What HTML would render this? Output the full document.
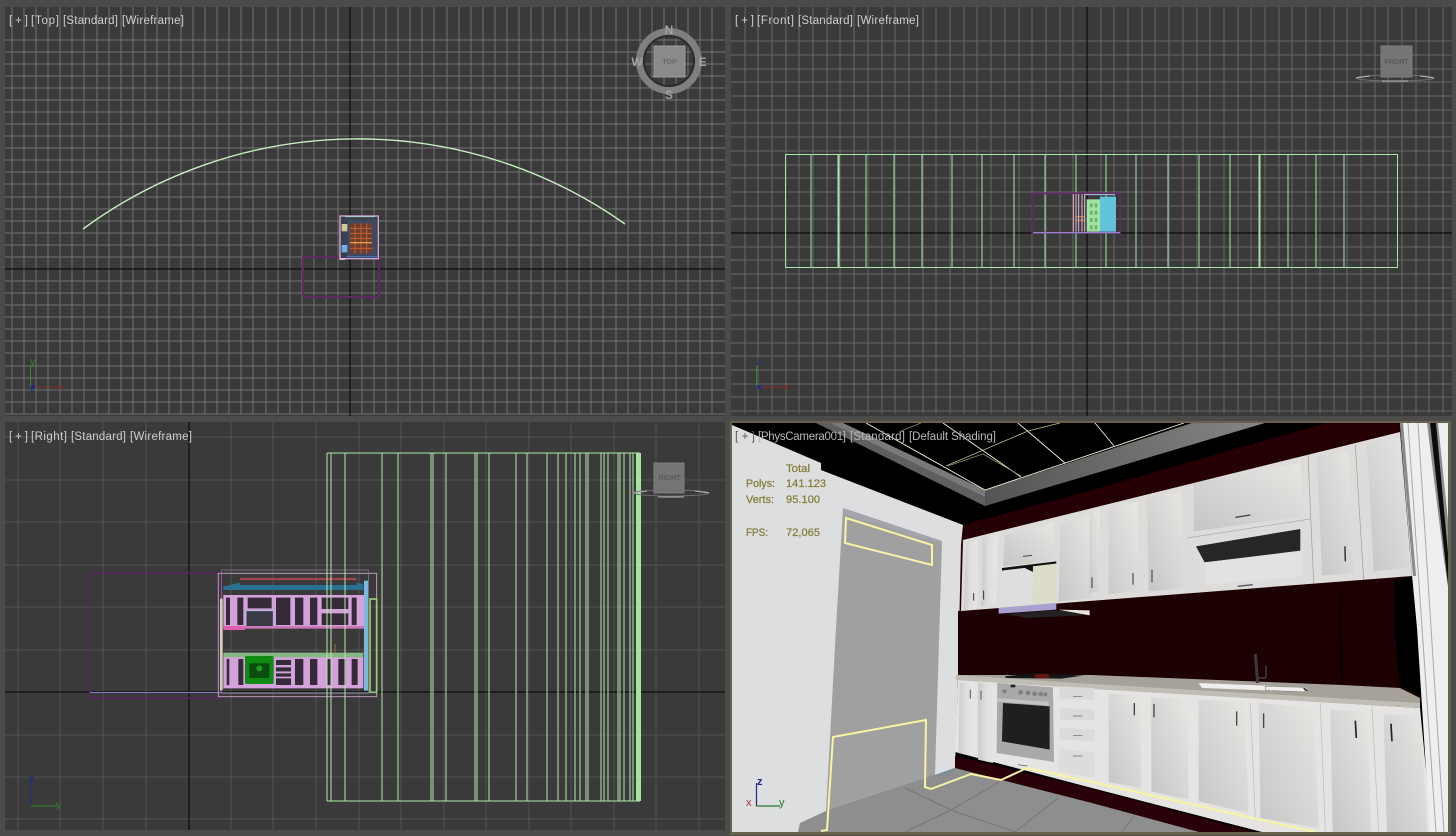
<!DOCTYPE html>
<html><head><meta charset="utf-8"><title>Viewports</title>
<style>
html,body{margin:0;padding:0;background:#4b4b4b;width:1456px;height:836px;overflow:hidden}
svg{display:block;position:absolute;left:0;top:0}
text{font-family:"Liberation Sans",sans-serif}
.l{font-size:11.5px;fill:#cfcfcf}
.p{font-size:11.5px;fill:#b8b8b8}
.s{font-size:11px;fill:#857d34;stroke:#857d34;stroke-width:.25px}
.g{shape-rendering:crispEdges;fill:none}
</style></head><body>
<svg width="1456" height="836" viewBox="0 0 1456 836" xmlns="http://www.w3.org/2000/svg">
<defs>
<clipPath id="c4"><rect x="732" y="423" width="716" height="409"/></clipPath>
<clipPath id="c3"><rect x="5" y="422" width="720" height="408"/></clipPath>
<linearGradient id="d1" x1="1" y1="0" x2="0" y2="1"><stop offset="0" stop-color="#e6e6e3"/><stop offset="1" stop-color="#c6c6c6"/></linearGradient>
<linearGradient id="d2" x1="1" y1="0" x2="0" y2="1"><stop offset="0" stop-color="#e8e7e4"/><stop offset="1" stop-color="#cacaca"/></linearGradient>
<linearGradient id="d3" x1="0" y1="0" x2="1" y2="0"><stop offset="0" stop-color="#cbcbcb"/><stop offset=".5" stop-color="#e0e0e0"/><stop offset="1" stop-color="#e6e6e6"/></linearGradient>
<linearGradient id="co" gradientUnits="userSpaceOnUse" x1="985" y1="500" x2="1265" y2="423"><stop offset="0" stop-color="#545454"/><stop offset="1" stop-color="#858585"/></linearGradient>
</defs>

<!-- viewport backgrounds -->
<rect x="5" y="7" width="720" height="409" fill="#3a3a3a"/>
<rect x="731" y="7" width="721" height="409" fill="#3a3a3a"/>
<rect x="5" y="422" width="720" height="408" fill="#3a3a3a"/>

<!-- top grid -->
<path class="g" stroke="#727272" d="M12 7V414M24 7V414M36 7V414M48 7V414M60 7V414M72 7V414M84 7V414M97 7V414M109 7V414M121 7V414M133 7V414M145 7V414M157 7V414M169 7V414M181 7V414M193 7V414M205 7V414M217 7V414M229 7V414M241 7V414M253 7V414M266 7V414M278 7V414M290 7V414M302 7V414M314 7V414M326 7V414M338 7V414M362 7V414M374 7V414M386 7V414M398 7V414M410 7V414M422 7V414M434 7V414M447 7V414M459 7V414M471 7V414M483 7V414M495 7V414M507 7V414M519 7V414M531 7V414M543 7V414M555 7V414M567 7V414M579 7V414M591 7V414M603 7V414M616 7V414M628 7V414M640 7V414M652 7V414M664 7V414M676 7V414M688 7V414M700 7V414M712 7V414M5 40H725M5 52H725M5 64H725M5 76H725M5 88H725M5 100H725M5 112H725M5 124H725M5 136H725M5 148H725M5 160H725M5 172H725M5 184H725M5 197H725M5 209H725M5 221H725M5 233H725M5 245H725M5 257H725M5 281H725M5 293H725M5 305H725M5 317H725M5 329H725M5 341H725M5 353H725M5 366H725M5 378H725M5 390H725M5 402H725M5 414H725"/>
<path class="g" stroke="#000" d="M350 7V416M5 269H725"/>

<!-- front grid -->
<path class="g" stroke="#686868" d="M745 7V414M758 7V414M772 7V414M786 7V414M799 7V414M813 7V414M827 7V414M840 7V414M854 7V414M868 7V414M882 7V414M895 7V414M909 7V414M923 7V414M936 7V414M950 7V414M964 7V414M977 7V414M991 7V414M1005 7V414M1019 7V414M1032 7V414M1046 7V414M1060 7V414M1073 7V414M1101 7V414M1114 7V414M1128 7V414M1142 7V414M1155 7V414M1169 7V414M1183 7V414M1197 7V414M1210 7V414M1224 7V414M1238 7V414M1251 7V414M1265 7V414M1279 7V414M1292 7V414M1306 7V414M1320 7V414M1334 7V414M1347 7V414M1361 7V414M1375 7V414M1388 7V414M1402 7V414M1416 7V414M1429 7V414M1443 7V414M731 41H1452M731 55H1452M731 69H1452M731 82H1452M731 96H1452M731 110H1452M731 123H1452M731 137H1452M731 151H1452M731 165H1452M731 178H1452M731 192H1452M731 206H1452M731 219H1452M731 247H1452M731 260H1452M731 274H1452M731 288H1452M731 301H1452M731 315H1452M731 329H1452M731 343H1452M731 356H1452M731 370H1452M731 384H1452M731 397H1452M731 411H1452"/>
<path class="g" stroke="#000" d="M1087 7V416M731 233H1452"/>

<!-- right grid -->
<path class="g" stroke="#535353" d="M18 422V830M60 422V830M103 422V830M146 422V830M231 422V830M273 422V830M316 422V830M359 422V830M401 422V830M444 422V830M486 422V830M529 422V830M571 422V830M614 422V830M656 422V830M699 422V830M5 437H725M5 480H725M5 522H725M5 565H725M5 607H725M5 650H725M5 735H725M5 777H725M5 819H725"/>
<path class="g" stroke="#000" d="M189 422V830M5 692H725"/>

<!-- TOP wires -->
<path d="M83 229A463 463 0 0 1 625 224" fill="none" stroke="#c6efbf" stroke-width="1.4"/>
<rect x="303" y="257" width="76" height="40" fill="none" stroke="#5f2a62" stroke-width="2"/>
<g transform="translate(290 200) scale(.3333)">
<rect x="150" y="48" width="115" height="128" fill="#38404e" stroke="#d8a8d8" stroke-width="4"/>
<rect x="172" y="60" width="88" height="110" fill="#3f4a60"/>
<rect x="180" y="70" width="66" height="90" fill="#6c3e30"/>
<path d="M180 85H246M180 100H246M180 115H246M180 145H246M195 70V160M213 70V160M230 70V160" stroke="#c8622c" stroke-width="3" fill="none"/>
<path d="M180 128H246" stroke="#e8a040" stroke-width="4"/>
<rect x="155" y="72" width="17" height="22" fill="#cfc79a"/>
<rect x="155" y="135" width="17" height="22" fill="#70b0e8"/>
<path d="M165 50H255" stroke="#a8d0c8" stroke-width="3"/>
<path d="M170 170H262" stroke="#4a7ac0" stroke-width="3"/>
<path d="M150 165V178H165" stroke="#f0c0f0" stroke-width="3" fill="none"/>
</g>

<!-- FRONT wires -->
<g fill="none" stroke="#a8e4a8" stroke-width="1">
<rect x="785.500" y="154.500" width="612" height="113"/>
<path class="g" d="M811 154V267M866 154V267M894 154V267M922 154V267M952 154V267M982 154V267M1014 154V267M1045 154V267M1076 154V267M1106 154V267M1136 154V267M1168 154V267M1199 154V267M1230 154V267M1288 154V267M1316 154V267M1344 154V267"/>
<path d="M838.500 154V267M1259.500 154V267" stroke-width="2"/>
</g>
<g transform="translate(1020 180) scale(.3333)">
<rect x="38" y="40" width="262" height="118" fill="none" stroke="#5f2a62" stroke-width="6"/>
<rect x="240" y="50" width="48" height="105" fill="#62c4dc"/>
<rect x="200" y="58" width="40" height="97" fill="#a4e2a4"/>
<path d="M210 70h8v12h-8zM224 70h8v12h-8zM210 92h8v12h-8zM224 92h8v12h-8zM210 114h8v12h-8zM224 114h8v12h-8zM210 136h8v12h-8zM224 136h8v12h-8z" fill="#6bb56b"/>
<path d="M160 42V155M168 42V155M176 42V155M186 42V155M194 42V155" stroke="#e8b8d8" stroke-width="3" fill="none"/>
<path d="M165 110H195M168 122H195" stroke="#d09060" stroke-width="3"/>
<path d="M195 44H285" stroke="#a0d0e8" stroke-width="3"/>
<path d="M40 158H300" stroke="#9a80d0" stroke-width="4"/>
</g>

<!-- RIGHT wires -->
<g clip-path="url(#c3)">
<rect x="90" y="573" width="130" height="125" fill="none" stroke="#5a2560" stroke-width="1.500"/>
<path d="M90 692.500H222" stroke="#7c80c4" stroke-width="1"/>
<g transform="translate(210 560) scale(.3333)">
<rect x="25" y="40" width="475" height="370" fill="none" stroke="#b89ab8" stroke-width="3"/>
<rect x="35" y="30" width="440" height="370" fill="none" stroke="#a07aa0" stroke-width="2"/>
<path d="M90 57L440 57" stroke="#a04450" stroke-width="7"/>
<path d="M40 80L90 68V75H440V68L460 72V90H40Z" fill="#2a7090"/>
<rect x="40" y="105" width="425" height="100" fill="#d4a2da"/>
<path d="M48 113h12v82h-12zM82 113h18v82h-18zM113 113h72v32h-72zM198 113h43v82h-43zM255 113h25v82h-25zM300 113h22v82h-22zM335 113h80v34h-80zM335 160h80v35h-80zM425 113h15v82h-15z" fill="#352a38"/>
<rect x="108" y="152" width="82" height="50" fill="#3a3a44" stroke="#a8b8e0" stroke-width="3"/>
<rect x="40" y="198" width="65" height="12" fill="#e060b0"/>
<rect x="105" y="198" width="360" height="8" fill="#c87ab8"/>
<rect x="40" y="290" width="420" height="95" fill="#d4a2da"/>
<path d="M50 297h8v78h-8zM85 297h15v78h-15zM255 297h25v78h-25zM300 297h22v78h-22zM352 297h12v78h-12zM385 297h22v78h-22zM425 297h18v78h-18zM198 300h45v15h-45zM198 322h45v12h-45zM198 340h45v10h-45zM198 355h45v20h-45z" fill="#352a38"/>
<rect x="40" y="278" width="420" height="14" fill="#86b884"/>
<rect x="105" y="288" width="86" height="84" rx="5" fill="#0f8a12"/>
<rect x="118" y="310" width="60" height="44" fill="#0b4d10"/>
<circle cx="148" cy="325" r="9" fill="#209a24"/>
<rect x="462" y="62" width="12" height="330" fill="#7ab8e2"/>
<rect x="480" y="117" width="20" height="280" fill="none" stroke="#96d070" stroke-width="5"/>
<rect x="30" y="116" width="8" height="275" fill="#d2d2b4"/>
<path d="M375 252V280" stroke="#a06a40" stroke-width="3"/>
<path d="M25 398H500" stroke="#88a0b0" stroke-width="2"/>
</g>
<path class="g" stroke="#b0eaac" d="M327 453V801M331 453V801M345 453V801M382 453V801M398 453V801M431 453V801M433 453V801M446 453V801M475 453V801M477 453V801M489 453V801M516 453V801M527 453V801M547 453V801M558 453V801M566 453V801M575 453V801M580 453V801M586 453V801M588 453V801M601 453V801M604 453V801M608 453V801M618 453V801M620 453V801M624 453V801M630 453V801M633 453V801M327 453H640M327 801H640"/>
<rect x="636" y="453" width="5" height="348" fill="#a4e4a0"/>
</g>

<!-- gizmos -->
<circle cx="669" cy="61" r="29.500" fill="none" stroke="#7f7f7f" stroke-width="7"/>
<circle cx="669" cy="61" r="25" fill="none" stroke="#2c2c2c" stroke-width="2"/>
<rect x="654" y="46" width="31" height="31" fill="#8a8a8a" stroke="#9c9c9c"/>
<text x="669.500" y="64" text-anchor="middle" font-size="7" font-weight="bold" fill="#6b6b6b">TOP</text>
<g font-size="12" font-weight="bold" fill="#a2a2a2" text-anchor="middle">
<text x="669" y="34">N</text><text x="637" y="66">W</text><text x="702.500" y="66">E</text><text x="669" y="99">S</text></g>

<rect x="1381" y="46" width="31" height="31" fill="#757575" stroke="#7f7f7f"/>
<text x="1396.500" y="64" text-anchor="middle" font-size="7" font-weight="bold" fill="#5a5a5a">FRONT</text>
<ellipse cx="1395" cy="78" rx="39" ry="3" fill="none" stroke="#6f6f6f"/>
<path d="M1356 78L1370 76M1420 76L1434 78M1382 81H1408" stroke="#b4b4b4" stroke-width="1"/>

<rect x="654" y="463" width="30" height="30" fill="#757575" stroke="#7f7f7f"/>
<text x="669.500" y="480" text-anchor="middle" font-size="7" font-weight="bold" fill="#5a5a5a">RIGHT</text>
<ellipse cx="671" cy="493" rx="38" ry="3" fill="none" stroke="#6f6f6f"/>
<path d="M633 493L647 491M695 491L709 493M658 497H684" stroke="#b4b4b4" stroke-width="1"/>

<!-- axes -->
<g font-size="9" fill="none">
<path d="M30.500 365V387" stroke="#2f8a2f"/><path d="M33 387H60" stroke="#8a2c2c"/><circle cx="33" cy="387" r="2" fill="#1d2a88"/>
<path d="M756.500 365V387" stroke="#2f8a2f" /><path d="M759 387H786" stroke="#8a2c2c"/><circle cx="759" cy="387" r="2" fill="#1d2a88"/>
<path d="M30.500 778V806" stroke="#1d2a88"/><path d="M31 806H57" stroke="#2f8a2f"/>
</g>
<g font-size="10">
<text x="30" y="365" fill="#2f8a2f">y</text><text x="58" y="390" fill="#8a2c2c">x</text><text x="30" y="391" fill="#1d2a88">z</text>
<text x="756" y="365" fill="#1d2a88">z</text><text x="784" y="390" fill="#8a2c2c">x</text>
<text x="29" y="782" fill="#1d2a88">z</text><text x="56" y="808" fill="#2f8a2f">y</text>
</g>

<!-- PERSPECTIVE -->
<rect x="730" y="421" width="721" height="414" fill="#69624a"/>
<g clip-path="url(#c4)">
<rect x="732" y="423" width="716" height="409" fill="#000"/>
<polygon points="732,425 821,463 821,470 963,525 955,768 935,775 826,811 798,832 732,832" fill="#dcdee0"/>
<polygon points="843,508 942,541 935,775 826,811 836,628" fill="#a0a0a0"/>
<polygon points="843,508 942,541 941.500,544 844,514" fill="#a4a4ac"/>
<!-- cornice -->
<polygon points="816,423 843,423 985,490 1192,423 1265,423 985,506" fill="url(#co)"/>
<polygon points="816,423 985,506 985,497 830,423" fill="#5f5f5f"/>
<polygon points="830,423 843,423 985,490 985,497" fill="#7a7a7a"/>
<!-- ceiling lines -->
<g fill="none" stroke="#f2f2d8" stroke-width=".9">
<path d="M866 423L985 490L1184 423"/>
<path d="M943 423L1021 477M1018 423L1065 463M1095 423L1114 446"/>
<path d="M946 466L1028 431L1060 423" stroke="#b8b890"/>
<path d="M948 466L983 454L1021 476" stroke="#8a8a6a"/>
<path d="M921 423L901 431" stroke="#8a8a6a"/>
</g>
<!-- red -->
<polygon points="963,525 1092,490 1325,423 1402,423 1402,435 1412,580 1422,700 958,680 961,545" fill="#240004"/>
<polygon points="958,611 1412,576 1422,700 958,675" fill="#1d0002"/>
<polygon points="1394,580 1412,577 1422,697 1400,686 1394,628" fill="#000"/>
<path d="M1339 593L1342 683" stroke="#050000" stroke-width="1.500"/>

<!-- upper cabinets -->
<polygon points="963,540 1400,432 1412,576 961,611" fill="#dedcda"/>
<g transform="translate(728 418) scale(.3333)">
<polygon points="715,375 750,365 748,570 708,575" fill="url(#d3)"/>
<polygon points="765,360 810,348 805,555 760,565" fill="url(#d3)"/>
<path d="M737 525V548M767 518V545" stroke="#333" stroke-width="3"/>
<polygon points="830,352 978,313 975,430 825,445" fill="url(#d1)"/>
<path d="M885 415L912 412" stroke="#444" stroke-width="3"/>
<polygon points="822,450 985,430 985,437 915,445 915,462 890,450 822,458" fill="#111"/>
<polygon points="822,458 890,450 915,462 912,555 815,568" fill="#dedede"/>
<polygon points="915,445 985,437 985,550 915,558" fill="#dcdcc8"/>
<polygon points="812,570 985,555 985,575 812,587" fill="#a8a0d0"/>
<polygon points="830,588 985,577 1085,580 1060,592 900,600" fill="#222"/>
<polygon points="990,575 1085,577 1085,592" fill="#e8e4d8"/>
<polygon points="998,318 1092,290 1092,540 992,550" fill="url(#d1)"/>
</g>
<g transform="translate(1092 418) scale(.3333)">
<polygon points="-8,285 22,275 22,520 -8,525" fill="url(#d2)"/>
<polygon points="50,270 138,252 138,515 50,530" fill="url(#d2)"/>
<polygon points="165,240 268,222 275,510 170,520" fill="url(#d1)"/>
<path d="M123 465V500M180 455V493M0 478V510" stroke="#333" stroke-width="3"/>
<polygon points="305,195 625,135 632,295 305,340" fill="url(#d1)"/>
<path d="M430 298L475 291" stroke="#444" stroke-width="4"/>
<path d="M285 360L655 303" stroke="#aaa" stroke-width="2"/>
<polygon points="312,385 625,333 625,398 338,433" fill="#262626"/>
<polygon points="338,433 630,400 630,475 340,500" fill="#e2e2e2"/>
<path d="M437 505L482 500" stroke="#555" stroke-width="4"/>
<polygon points="675,115 768,98 785,465 690,472" fill="url(#d1)"/>
<path d="M759 385L760 430M861 372L864 420" stroke="#222" stroke-width="4"/>
<polygon points="825,75 925,60 950,450 845,460" fill="url(#d1)"/>
<path d="M648 110L665 495M790 80L815 485" stroke="#999" stroke-width="2"/>
</g>

<!-- base cabinets -->
<polygon points="958,680 1092,688 1420,708 1432,832 1262,832 1092,788 955,752" fill="#e6e4e2"/>
<!-- plinth -->
<polygon points="955,756 1092,789 1255,832 1199,832 1092,803 955,768" fill="#2a0008"/>
<!-- floor -->
<polygon points="798,832 800,823 826,811 935,775 955,768 1092,803 1199,832" fill="#8e8e8e"/>
<path d="M905,788L951,810L1015,832M951,810L1001,781M905,832L951,810M1015,832L1058,798M1122,832L1134,816" stroke="#757575" stroke-width="1" fill="none"/>
<polygon points="935,775 955,768 955,771 942,776" fill="#7f8b96"/>
<!-- countertop -->
<polygon points="956,675 1092,675 1342,685 1400,688 1420,698 1420,708 1092,688 956,679" fill="#a6a299"/>
<polygon points="956,675 1092,684 1420,703 1420,708 1092,689 956,680" fill="#bfbdb5"/>
<g transform="translate(728 628) scale(.3333)">
<polygon points="695,165 740,163 738,385 692,375" fill="url(#d3)"/>
<polygon points="750,165 803,168 795,405 750,395" fill="url(#d3)"/>
<path d="M727 185V212M759 188V215" stroke="#555" stroke-width="3"/>
<polygon points="808,165 975,178 978,402 806,375" fill="#a9a9a9"/>
<polygon points="825,225 965,235 965,365 822,340" fill="#1e2020"/>
<polygon points="808,210 962,222 962,233 808,220" fill="#c4c4c4"/>
<rect x="848" y="170" width="14" height="8" fill="#222"/>
<g fill="#808080"><circle cx="830" cy="190" r="6"/><circle cx="878" cy="193" r="7"/><circle cx="900" cy="195" r="7"/><circle cx="920" cy="197" r="7"/><circle cx="938" cy="198" r="7"/><circle cx="952" cy="199" r="6"/></g>
<polygon points="815,385 975,405 975,430 815,405" fill="#e4e4e4"/>
<path d="M870 410L898 414" stroke="#555" stroke-width="2"/>
<polygon points="830,145 925,135 1065,143 1000,152 835,150" fill="#151515"/>
<polygon points="920,140 960,138 965,150 925,152" fill="#6a1515"/>
<polygon points="995,175 1100,180 1100,215 995,213" fill="#dadada"/>
<polygon points="995,240 1100,245 1100,278 995,275" fill="#dadada"/>
<polygon points="995,300 1100,305 1100,340 995,335" fill="#dadada"/>
<polygon points="995,360 1100,375 1100,450 990,430" fill="#dcdcdc"/>
<path d="M1035 206h28M1035 264h28M1035 323h28M1035 384h28" stroke="#666" stroke-width="2"/>
</g>
<g transform="translate(1092 628) scale(.3333)">
<polygon points="50,197 145,203 148,480 50,462" fill="url(#d1)"/>
<polygon points="178,210 285,212 290,515 178,490" fill="url(#d1)"/>
<polygon points="320,215 458,222 470,555 320,520" fill="url(#d1)"/>
<polygon points="500,225 665,238 680,600 505,570" fill="url(#d1)"/>
<polygon points="715,245 825,250 838,612 722,612" fill="url(#d1)"/>
<polygon points="875,260 985,262 1005,612 885,612" fill="url(#d1)"/>
<path d="M127 225V262M186 228V268M434 250V293M515 256V300" stroke="#444" stroke-width="4"/>
<path d="M790 278L793 330M897 287L900 340" stroke="#222" stroke-width="5"/>
<path d="M475 225L490 570M685 225L700 610M840 235L860 612" stroke="#bbb" stroke-width="2"/>
<polygon points="320,165 640,178 650,192 520,187 330,180" fill="#eeeeec"/>
<path d="M490 78L497 165" stroke="#3a3a3a" stroke-width="9"/>
<path d="M522 112V150M495 150H522" stroke="#3a3a3a" stroke-width="5" fill="none"/>
<polygon points="520,175 635,178 640,192 520,187" fill="none" stroke="#888" stroke-width="2"/>
<path d="M635 180l12 10" stroke="#222" stroke-width="4"/>
</g>

<!-- pillar -->
<polygon points="1400,423 1450,423 1450,832 1430,832 1417,628 1412,575" fill="#eceef0"/>
<path d="M1408 423L1436 832M1418 423L1444 832" stroke="#a8a8a8" stroke-width="1" fill="none"/>
<polygon points="1400,423 1403,423 1416,576 1413,576" fill="#8a8a8a"/>
<polygon points="1427,423 1438,423 1450,540 1450,600 1444,560" fill="#8c8c8c"/>
<polygon points="1430,423 1436,423 1450,575 1448,585" fill="#0c0c0c"/>

<!-- selection outline -->
<g fill="none" stroke="#f8f4a4" stroke-width="2">
<path d="M821 831L827 830L833 737L926 720L925 787L931 789L971 774L1001 780L1027 768L1092 782L1315 832"/>
<polygon points="846,518 932,545 932,565 845,543"/>
</g>

<!-- persp axes -->
<path d="M756.500 783V806" stroke="#1d2a88" stroke-width="1.200"/>
<path d="M756 806H780" stroke="#2a7a2a" stroke-width="1.200"/>
<text x="757" y="785" font-size="11" fill="#1d2a88" font-weight="bold">z</text>
<text x="746" y="806" font-size="11" fill="#b03030">x</text>
<text x="779" y="806" font-size="11" fill="#2a7a2a">y</text>

<!-- stats -->
<text class="s" x="786" y="472" textLength="24" lengthAdjust="spacingAndGlyphs">Total</text>
<text class="s" x="746" y="487" textLength="29" lengthAdjust="spacingAndGlyphs">Polys:</text>
<text class="s" x="786" y="487" textLength="40" lengthAdjust="spacing">141.123</text>
<text class="s" x="746" y="503" textLength="28" lengthAdjust="spacingAndGlyphs">Verts:</text>
<text class="s" x="786" y="503" textLength="34" lengthAdjust="spacing">95.100</text>
<text class="s" x="746" y="536" textLength="22" lengthAdjust="spacingAndGlyphs">FPS:</text>
<text class="s" x="786" y="536" textLength="34" lengthAdjust="spacing">72,065</text>
</g>

<!-- labels -->
<g class="lb">
<text class="l" x="9" y="24" textLength="19" lengthAdjust="spacing">[+]</text>
<text class="l" x="31" y="24" textLength="28" lengthAdjust="spacing">[Top]</text>
<text class="l" x="63" y="24" textLength="55" lengthAdjust="spacing">[Standard]</text>
<text class="l" x="122" y="24" textLength="62" lengthAdjust="spacing">[Wireframe]</text>

<text class="l" x="735" y="24" textLength="19" lengthAdjust="spacing">[+]</text>
<text class="l" x="757" y="24" textLength="37" lengthAdjust="spacing">[Front]</text>
<text class="l" x="798" y="24" textLength="55" lengthAdjust="spacing">[Standard]</text>
<text class="l" x="857" y="24" textLength="62" lengthAdjust="spacing">[Wireframe]</text>

<text class="l" x="9" y="440" textLength="19" lengthAdjust="spacing">[+]</text>
<text class="l" x="31" y="440" textLength="36" lengthAdjust="spacing">[Right]</text>
<text class="l" x="71" y="440" textLength="55" lengthAdjust="spacing">[Standard]</text>
<text class="l" x="130" y="440" textLength="62" lengthAdjust="spacing">[Wireframe]</text>

<text class="p" style="fill:#555" x="735" y="440" textLength="20" lengthAdjust="spacing">[+]</text>
<text class="p" x="758" y="440" textLength="88" lengthAdjust="spacing">[PhysCamera001]</text>
<text class="p" x="850" y="440" textLength="55" lengthAdjust="spacing">[Standard]</text>
<text class="p" x="909" y="440" textLength="87" lengthAdjust="spacing">[Default Shading]</text>
</g>
</svg>
</body></html>
